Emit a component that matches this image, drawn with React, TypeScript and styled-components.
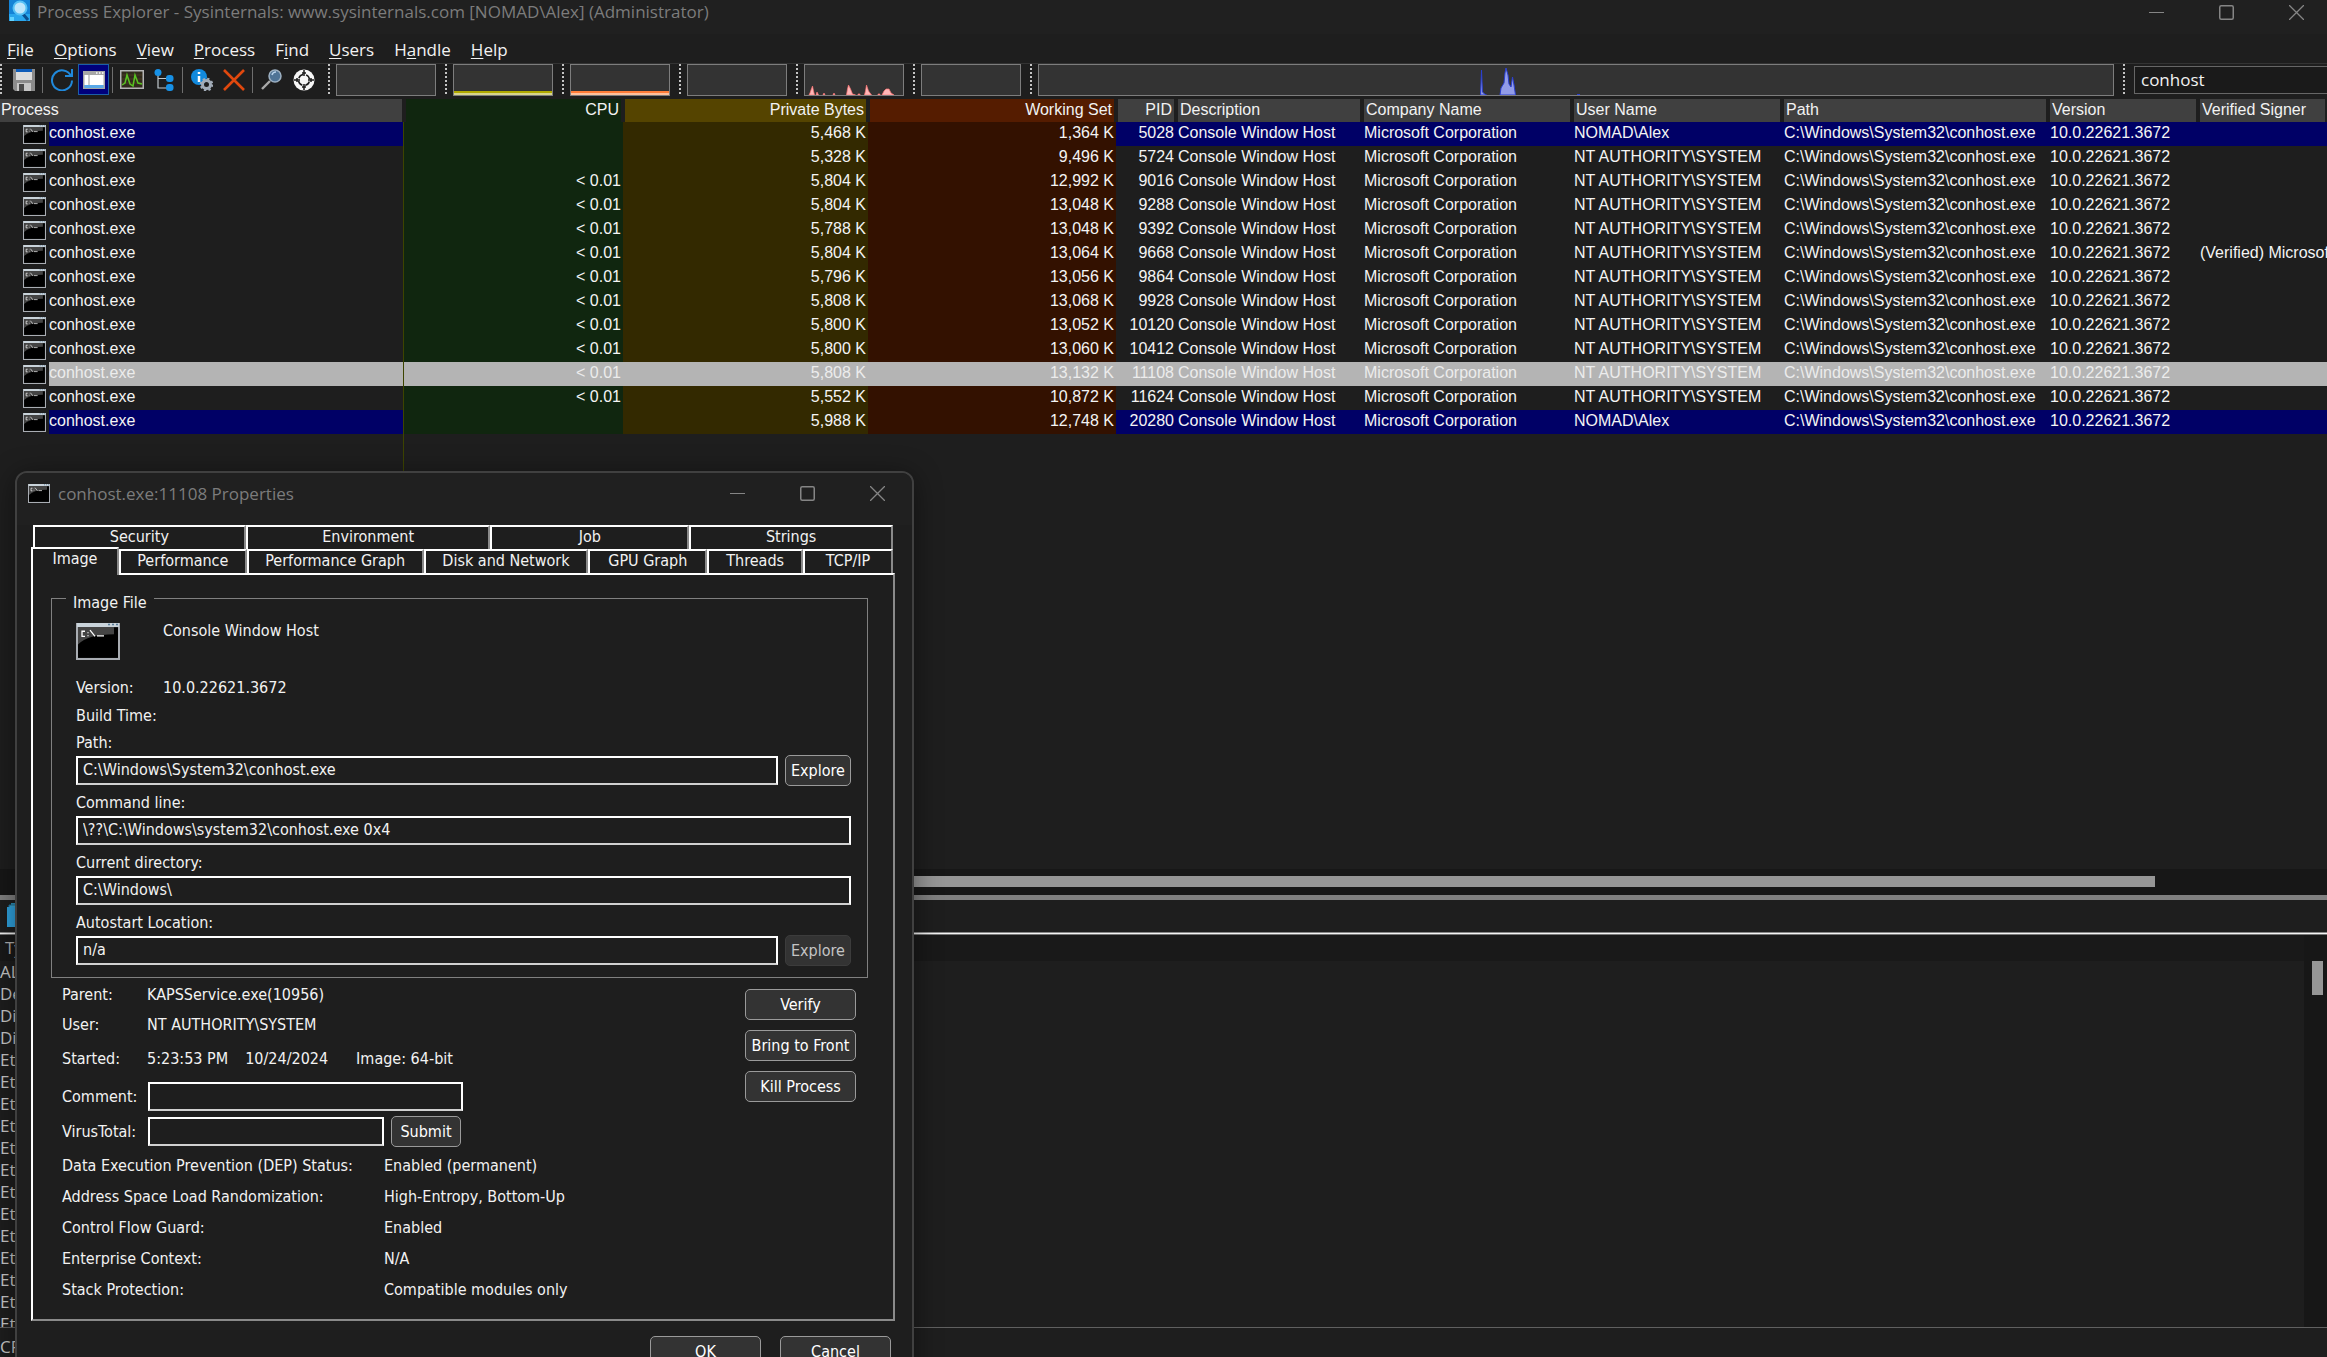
import React from "react";
import styled, { createGlobalStyle, css } from "styled-components";

const UI = `"Open Sans", "Noto Sans", sans-serif`;
const GRID = `"Liberation Sans", Arial, sans-serif`;
const DIALOG = `"DejaVu Sans Condensed", "DejaVu Sans", "Noto Sans", sans-serif`;

const GlobalStyle = createGlobalStyle`
  * { box-sizing: border-box; }
  body { margin: 0; background: #1e1e1e; color: #f2f2f2; overflow: hidden; }
  button, input { font: inherit; color: inherit; margin: 0; }
  button { padding: 0; border: 0; background: none; }
  svg { display: block; flex: none; }
`;

const Shell = styled.div`
  position: relative;
  display: flex;
  flex-direction: column;
  height: 100vh;
  overflow: hidden;
  font: 17px/24px ${UI};
`;

/* ---------- main window chrome ---------- */

const TitleBar = styled.header`
  display: flex;
  align-items: flex-start;
  height: 34px;
  padding-left: 9px;
  background: #202020;
  color: #7c7c7c;
`;

const WindowTitle = styled.h1`
  flex: 1;
  margin: 0;
  padding-left: 7px;
  font: inherit;
  white-space: nowrap;
`;

const WindowControls = styled.div`
  display: flex;
  gap: 8px;
`;

const WindowButton = styled.button`
  display: flex;
  align-items: center;
  justify-content: center;
  width: 62px;
  height: 24px;
`;

const MenuBar = styled.nav`
  display: flex;
  gap: 20px;
  height: 30px;
  padding: 4px 7px;
  border-bottom: 1px solid #333;
`;

const MenuItem = styled.button`
  white-space: nowrap;
  line-height: 24px;
  u { text-underline-offset: 2px; }
`;

const Toolbar = styled.div`
  display: flex;
  height: 35px;
  padding-bottom: 3px;
`;

const Grip = styled.span`
  flex: none;
  width: 2px;
  height: 30px;
  background: repeating-linear-gradient(#c4c4c4 0 2px, transparent 2px 4px);
`;

const IconRow = styled.div`
  display: flex;
  align-items: center;
  gap: 1px;
  width: 326px;
  height: 31px;
  padding-left: 6px;
`;

const ToolButton = styled.button<{ $active?: boolean }>`
  display: flex;
  align-items: center;
  justify-content: center;
  width: 31px;
  height: 31px;
  border: 1px solid ${(p) => (p.$active ? "#1c5fa6" : "transparent")};
  background: ${(p) => (p.$active ? "#00007c" : "transparent")};
`;

const ToolDivider = styled.span`
  width: 1px;
  height: 26px;
  margin: 0 2px;
  background: #6e6e6e;
`;

const GraphBand = styled.div<{ $wide?: boolean }>`
  display: flex;
  gap: 6px;
  padding-right: 9px;
  ${(p) => (p.$wide ? css`flex: 1;` : css`flex: none; width: 117px;`)}
`;

const GraphBox = styled.div`
  flex: 1;
  display: flex;
  align-items: flex-end;
  border: 1px solid #7d7d7d;
  background: #333;
`;

const LevelBar = styled.div<{ $top: string; $bottom: string }>`
  flex: 1;
  height: 4px;
  background: linear-gradient(${(p) => p.$top} 50%, ${(p) => p.$bottom} 50%);
`;

const SearchBand = styled.div`
  display: flex;
  gap: 9px;
  width: 204px;
`;

const SearchInput = styled.input`
  flex: 1;
  min-width: 0;
  height: 28px;
  margin-top: 2px;
  padding: 0 6px 2px;
  border: 1px solid #666;
  border-right: 0;
  border-radius: 0;
  background: #1a1a1a;
`;

/* ---------- process list ---------- */

const ProcessPane = styled.main`
  flex: 1;
  min-height: 0;
  overflow: hidden;
  display: flex;
  flex-direction: column;
  background: #1e1e1e;
`;

const ProcessTable = styled.table`
  width: 100%;
  table-layout: fixed;
  border-collapse: separate;
  border-spacing: 0;
  font: 16px/20px ${GRID};
`;

const HeadCell = styled.th<{ $bg?: string; $right?: boolean; $first?: boolean }>`
  height: 23px;
  padding: 0 2px 2px ${(p) => (p.$first ? "1px" : "2px")};
  border: solid #1e1e1e;
  border-width: 0 2px;
  border-left-width: ${(p) => (p.$first ? "0" : "2px")};
  background: ${(p) => p.$bg || "#404040"};
  font-weight: 400;
  text-align: ${(p) => (p.$right ? "right" : "left")};
  white-space: nowrap;
  overflow: hidden;
`;

type Tone = "own" | "selected" | "plain";
const toneBg = { own: "#000066", selected: "#b4b4b4", plain: "transparent" };

const Row = styled.tr<{ $tone: Tone }>`
  height: 24px;
  color: ${(p) => (p.$tone === "selected" ? "#ececec" : "#f4f4f4")};
`;

const Cell = styled.td<{ $tone: Tone; $bg?: string; $right?: boolean }>`
  padding: 0 2px 2px;
  text-align: ${(p) => (p.$right ? "right" : "left")};
  white-space: nowrap;
  overflow: hidden;
  background: ${(p) => (p.$tone === "selected" ? toneBg.selected : p.$bg || toneBg[p.$tone])};
`;

const NameCell = styled.td`
  padding: 0 0 0 23px;
  border-right: 1px solid #3d4400;
`;

const NameWrap = styled.div`
  display: flex;
  align-items: center;
  gap: 3px;
`;

const Name = styled.span<{ $tone: Tone }>`
  flex: 1;
  height: 24px;
  padding-bottom: 2px;
  line-height: 22px;
  background: ${(p) => toneBg[p.$tone]};
`;

const ColumnTail = styled.div`
  flex: 1;
  width: 404px;
  border-right: 1px solid #3d4400;
`;

const HScroll = styled.div`
  flex: none;
  display: flex;
  align-items: flex-start;
  height: 26px;
  padding: 7px 172px 0 20px;
  background: #171717;
`;

const HThumb = styled.div`
  flex: 1;
  height: 11px;
  background: #969696;
`;

/* ---------- handle list ---------- */

const LowerPane = styled.section`
  flex: none;
  border-top: 5px solid #808080;
`;

const LowerTabs = styled.div`
  height: 32px;
  padding: 3px 7px;
  background: #1e1e1e;
`;

const LowerRule = styled.div`
  height: 3px;
  background: linear-gradient(#888 0 1px, #f4f4f4 1px 2px, #777 2px);
`;

const LowerBody = styled.div`
  display: flex;
  height: 393px;
  border-bottom: 1px solid #606060;
  overflow: hidden;
`;

const HandleTable = styled.table`
  flex: 1;
  align-self: flex-start;
  border-collapse: collapse;
  color: #c8c8c8;
  font: 17px/22px ${UI};
  th { height: 26px; padding: 0 5px; background: #191919; color: #b0b0b0; font-weight: 400; text-align: left; }
  td { height: 22px; padding: 0; }
`;

const VScroll = styled.div`
  width: 23px;
  padding: 26px 4px 0 8px;
  background: #171717;
`;

const VThumb = styled.div`
  height: 34px;
  background: #969696;
`;

const StatusBar = styled.footer`
  height: 29px;
  padding-top: 9px;
  line-height: 20px;
  color: #c8c8c8;
`;

/* ---------- properties dialog ---------- */

const Dialog = styled.section`
  position: absolute;
  left: 15px;
  top: 471px;
  width: 899px;
  height: 920px;
  padding: 0 17px 0 14px;
  display: flex;
  flex-direction: column;
  border: 2px solid #404040;
  border-radius: 12px;
  background: #1e1e1e;
  box-shadow: 0 4px 28px rgba(0, 0, 0, 0.45);
  font: 16px/20px ${DIALOG};
`;

const DialogTitle = styled.header`
  display: flex;
  align-items: center;
  height: 52px;
  margin: 0 -17px 0 -14px;
  padding: 0 4px 11px 11px;
  border-radius: 10px 10px 0 0;
  background: #202020;
  color: #7c7c7c;
  font: 17px/24px ${UI};
`;

const DialogName = styled.h2`
  flex: 1;
  margin: 0;
  padding-left: 8px;
  font: inherit;
`;

const TabRow = styled.div<{ $cols: string }>`
  display: grid;
  grid-template-columns: ${(p) => p.$cols};
  margin: 0 2px;
`;

const Tab = styled.button<{ $selected?: boolean }>`
  position: relative;
  height: 24px;
  padding-bottom: 3px;
  line-height: 19px;
  border: solid #fff;
  border-width: 2px 2px 0 2px;
  border-right-color: #8a8a8a;
  background: #1e1e1e;
  white-space: nowrap;
  ${(p) =>
    p.$selected &&
    css`
      height: 28px;
      margin: -2px 0 -2px -2px;
      padding: 0 0 7px;
      z-index: 1;
    `}
`;

const Panel = styled.div`
  flex: none;
  height: 748px;
  padding: 8px 25px 0 18px;
  border: 2px solid #fff;
  border-right-color: #8a8a8a;
  border-bottom-color: #8a8a8a;
`;

const ImageFile = styled.fieldset`
  margin: 0;
  padding: 8px 16px 11px 24px;
  border: 1px solid #808080;
`;

const Legend = styled.legend`
  margin-left: -10px;
  padding: 10px 7px 0;
`;

const AppRow = styled.div`
  display: flex;
  align-items: flex-start;
  gap: 43px;
  height: 57px;
  svg { margin-top: 2px; }
`;

const Facts = styled.dl<{ $label: number; $gap: number }>`
  display: grid;
  grid-template-columns: ${(p) => p.$label}px 1fr;
  row-gap: ${(p) => p.$gap}px;
  margin: 0;
  dt, dd { margin: 0; min-height: 20px; white-space: nowrap; }
`;

const Field = styled.div`
  display: flex;
  flex-direction: column;
  gap: 2px;
  margin-top: 7px;
`;

const FieldRow = styled.div`
  display: flex;
  align-items: center;
  gap: 7px;
  height: 31px;
`;

const TextInput = styled.input<{ $width?: number }>`
  ${(p) => (p.$width ? css`width: ${p.$width}px;` : css`flex: 1;`)}
  min-width: 0;
  height: 29px;
  padding: 0 5px 3px;
  border: 2px solid #fff;
  border-bottom-color: #d0d0d0;
  border-radius: 0;
  background: #1e1e1e;
`;

const PushButton = styled.button<{ $width: number }>`
  flex: none;
  width: ${(p) => p.$width}px;
  height: 31px;
  border: 1px solid #9a9a9a;
  border-radius: 5px;
  background: #333;
  color: #fff;
  white-space: nowrap;
  &:disabled { border-color: #3c3c3c; color: #c4c4c4; }
`;

const Details = styled.div`
  display: flex;
  justify-content: space-between;
  padding: 7px 12px 0 11px;
`;

const DetailColumn = styled.div`
  display: flex;
  flex-direction: column;
`;

const Started = styled.div`
  display: flex;
  margin: 14px 0 12px;
`;

const StartedPart = styled.span<{ $space: number }>`
  padding-right: ${(p) => p.$space}px;
`;

const StartedLabel = styled.span`
  width: 85px;
`;

const LabelledRow = styled(FieldRow)`
  margin-bottom: 4px;
  label { width: 79px; }
`;

const Mitigations = styled(Facts)`
  margin-top: 5px;
`;

const ButtonColumn = styled.div`
  display: flex;
  flex-direction: column;
  gap: 10px;
  padding-top: 4px;
`;

const DialogButtons = styled.footer`
  display: flex;
  justify-content: flex-end;
  gap: 19px;
  padding: 15px 4px 0 0;
`;

/* ---------- drawings ---------- */

const ConsoleIcon = ({ w = 23, h = 19 }: { w?: number; h?: number }) => (
  <svg width={w} height={h} viewBox="0 0 44 36" preserveAspectRatio="none" aria-hidden>
    <rect x="1" y="1" width="42" height="34" fill="#000" stroke="#a9adb3" strokeWidth="2" />
    <rect x="1" y="0" width="42" height="4" fill="#c9d3da" />
    <path d="M32 1.500h2m2 0h2m2 0h2" stroke="#5a7c98" strokeWidth="1.500" />
    <path d="M2 4h36v7Q12 11 2 21z" fill="#444" />
    <path d="M9 8H6v5h3M12 9v1M12 12v1M14 7l5 6M21 12.500h7" fill="none" stroke="#fff" strokeWidth="1.300" />
  </svg>
);

const AppIcon = () => (
  <svg width="21" height="21" viewBox="0 0 21 21" aria-hidden>
    <rect width="21" height="21" fill="#1583d6" />
    <path d="M0 14h21v7H0z" fill="#2aa6ec" />
    <path d="M14 14l5 6" stroke="#0b4f8f" strokeWidth="3" />
    <circle cx="11" cy="8" r="6.500" fill="#bfe6fb" stroke="#57c1f5" strokeWidth="2" />
    <path d="M1 17h4v4H1z" fill="#62d3ff" />
  </svg>
);

const Minimize = () => (
  <svg width="15" height="15" viewBox="0 0 15 15" aria-hidden><path d="M0 7.500h15" stroke="#858585" /></svg>
);
const Maximize = () => (
  <svg width="15" height="15" viewBox="0 0 15 15" aria-hidden>
    <rect x=".75" y=".75" width="13.500" height="13.500" rx="1.500" fill="none" stroke="#858585" strokeWidth="1.500" />
  </svg>
);
const Close = () => (
  <svg width="15" height="15" viewBox="0 0 15 15" aria-hidden><path d="M0 0l15 15M15 0L0 15" stroke="#858585" strokeWidth="1.300" /></svg>
);

const SaveIcon = () => (
  <svg width="22" height="22" viewBox="0 0 22 22" aria-hidden>
    <path d="M0 0h22v22H2l-2-2z" fill="#8b8b8b" />
    <path d="M3 0h16v11H3z" fill="#dcdcdc" />
    <path d="M3 0h16v3H3z" fill="#0f5cb8" />
    <path d="M4 14h14v8H4z" fill="#c6c6c6" />
    <path d="M6 15h5v7H6z" fill="#4a4a4a" />
  </svg>
);
const RefreshIcon = () => (
  <svg width="22" height="22" viewBox="0 0 22 22" fill="none" stroke="#2089dc" strokeWidth="2" aria-hidden>
    <path d="M20 7A10 10 0 1 0 21 11.500M21 0v7h-7" />
  </svg>
);
const PaneIcon = () => (
  <svg width="22" height="18" viewBox="0 0 22 18" aria-hidden>
    <rect width="22" height="18" fill="#a6a6a6" />
    <rect x="1.500" y="4" width="19" height="10" fill="#fff" />
    <path d="M6 4v10" stroke="#999" />
    <path d="M1.500 14h19v3h-19z" fill="#58a8e8" />
    <path d="M13 2h1.500m1.500 0h1.500m1.500 0h1.500" stroke="#fff" strokeWidth="1.500" />
  </svg>
);
const ChartIcon = () => (
  <svg width="24" height="19" viewBox="0 0 24 19" aria-hidden>
    <rect x=".75" y=".75" width="22.500" height="17.500" fill="#302a1c" stroke="#b4b4b4" strokeWidth="1.500" />
    <path d="M2 5h20M2 9h20M2 13h20" stroke="#4a3a22" />
    <path d="M2 15l3-2 2-8 3 9 3 2 2-11 3 8 4 1" fill="none" stroke="#58c322" strokeWidth="1.500" />
  </svg>
);
const TreeIcon = () => (
  <svg width="20" height="22" viewBox="0 0 20 22" aria-hidden>
    <path d="M4 4v15h11M4 9.500h11" fill="none" stroke="#c0c8ce" strokeWidth="1.200" />
    <circle cx="4" cy="3.500" r="3.500" fill="#1791e6" />
    <rect x="12" y="6" width="7.500" height="7" rx="3" fill="#1791e6" />
    <rect x="12" y="15" width="7.500" height="7" rx="3" fill="#1791e6" />
  </svg>
);
const InfoIcon = () => (
  <svg width="22" height="22" viewBox="0 0 22 22" aria-hidden>
    <circle cx="8" cy="8" r="8" fill="#128ade" />
    <path d="M8 3v2M8 7v6" stroke="#fff" strokeWidth="2.500" />
    <circle cx="15.500" cy="15.500" r="4" fill="none" stroke="#a2acb8" strokeWidth="3" />
    <circle cx="15.500" cy="15.500" r="5.800" fill="none" stroke="#a2acb8" strokeWidth="2" strokeDasharray="2.300 2.250" />
  </svg>
);
const KillIcon = () => (
  <svg width="22" height="22" viewBox="0 0 22 22" aria-hidden><path d="M1 1l20 20M21 1L1 21" stroke="#e0480e" strokeWidth="2.600" /></svg>
);
const FindIcon = () => (
  <svg width="21" height="21" viewBox="0 0 21 21" aria-hidden>
    <path d="M1 20l8-8" stroke="#a9a9a9" strokeWidth="2.400" />
    <circle cx="14" cy="7" r="6" fill="#4f7396" stroke="#9db0c2" strokeWidth="1.500" />
    <path d="M11 6a4 4 0 0 1 4-3" fill="none" stroke="#b8d2ea" strokeWidth="1.500" />
  </svg>
);
const TargetIcon = () => (
  <svg width="22" height="22" viewBox="0 0 22 22" fill="none" aria-hidden>
    <circle cx="11" cy="11" r="10.500" fill="#f6f6f6" />
    <circle cx="11" cy="11" r="5.500" stroke="#1a1a1a" strokeWidth="1.500" strokeDasharray="5.640 3" strokeDashoffset="-1.500" />
    <path d="M11 1v6M11 15v6M1 11h6M15 11h6M9 4h4M9 18h4M4 9v4M18 9v4" stroke="#1a1a1a" strokeWidth="1.500" />
  </svg>
);
const HandlesIcon = () => (
  <svg width="22" height="24" viewBox="0 0 22 24" aria-hidden>
    <path d="M4 0h18v20H4z" fill="#2c8fb8" />
    <path d="M2 2h18v20H2z" fill="#3aa6d2" stroke="#1e6f96" />
    <path d="M0 4h18v20H0z" fill="#2fa3e0" />
  </svg>
);

const IoSpikes = () => (
  <svg width="98" height="12" viewBox="0 0 98 12" aria-hidden>
    <path d="M4 12l1-2 1-3 1.500-4 1 5 1 4zM11 12l1-3 1.500 3zM18 12l1-2 1 2zM28 12l1-2 1 2zM41.500 12l1-6 1-4 2 4 2 5 3 1zM53 12v-1h2v1zM59.500 12l1-4 1-6 2 6 3 4zM73 12v-1h2v1zM77 12l2-4 2-2h3l2 4 3 2z" fill="#ffb8b8" stroke="#ff7474" strokeWidth=".7" />
  </svg>
);

const SpikeSlot = styled.div`
  margin-left: 40%;
`;

const CpuSpikes = () => (
  <svg width="119" height="28" viewBox="-9 0 119 28" aria-hidden>
    <path d="M2.500 28l.5-12 .5-13 .5 12 .5 10 2 2 2 1zM22 28l1-7 3-5 1-10 1-5 2 7 1 9 2 3 1.500-10 1.500 8 1.500 10z" fill="#929ce8" stroke="#2a3fd0" strokeWidth="1" />
    <path d="M99 27.500h3" stroke="#2a3fd0" />
  </svg>
);

/* ---------- data ---------- */

const menu: [string, string, string][] = [
  ["", "F", "ile"], ["", "O", "ptions"], ["", "V", "iew"], ["", "P", "rocess"],
  ["F", "i", "nd"], ["", "U", "sers"], ["H", "a", "ndle"], ["", "H", "elp"],
];

const LOW = "< 0.01";
const SYSTEM = "NT AUTHORITY\\SYSTEM";
const ALEX = "NOMAD\\Alex";

type Proc = { cpu: string; priv: string; ws: string; pid: string; user: string; tone: Tone; signer?: string };
const processes: Proc[] = [
  { cpu: "", priv: "5,468 K", ws: "1,364 K", pid: "5028", user: ALEX, tone: "own" },
  { cpu: "", priv: "5,328 K", ws: "9,496 K", pid: "5724", user: SYSTEM, tone: "plain" },
  { cpu: LOW, priv: "5,804 K", ws: "12,992 K", pid: "9016", user: SYSTEM, tone: "plain" },
  { cpu: LOW, priv: "5,804 K", ws: "13,048 K", pid: "9288", user: SYSTEM, tone: "plain" },
  { cpu: LOW, priv: "5,788 K", ws: "13,048 K", pid: "9392", user: SYSTEM, tone: "plain" },
  { cpu: LOW, priv: "5,804 K", ws: "13,064 K", pid: "9668", user: SYSTEM, tone: "plain", signer: "(Verified) Microsoft" },
  { cpu: LOW, priv: "5,796 K", ws: "13,056 K", pid: "9864", user: SYSTEM, tone: "plain" },
  { cpu: LOW, priv: "5,808 K", ws: "13,068 K", pid: "9928", user: SYSTEM, tone: "plain" },
  { cpu: LOW, priv: "5,800 K", ws: "13,052 K", pid: "10120", user: SYSTEM, tone: "plain" },
  { cpu: LOW, priv: "5,800 K", ws: "13,060 K", pid: "10412", user: SYSTEM, tone: "plain" },
  { cpu: LOW, priv: "5,808 K", ws: "13,132 K", pid: "11108", user: SYSTEM, tone: "selected" },
  { cpu: LOW, priv: "5,552 K", ws: "10,872 K", pid: "11624", user: SYSTEM, tone: "plain" },
  { cpu: "", priv: "5,988 K", ws: "12,748 K", pid: "20280", user: ALEX, tone: "own" },
];

const handleTypes = ["ALPC Port", "Desktop", "Directory", "Directory", ...Array(13).fill("EtwRegistration")];

const columnWidths = [404, 219, 245, 248, 60, 186, 210, 210, 266, 150];

const WindowButtons = () => (
  <WindowControls>
    <WindowButton aria-label="Minimize"><Minimize /></WindowButton>
    <WindowButton aria-label="Maximize"><Maximize /></WindowButton>
    <WindowButton aria-label="Close"><Close /></WindowButton>
  </WindowControls>
);

const ProcessRow = ({ p }: { p: Proc }) => (
  <Row $tone={p.tone}>
    <NameCell>
      <NameWrap><ConsoleIcon /><Name $tone={p.tone}>conhost.exe</Name></NameWrap>
    </NameCell>
    <Cell $tone={p.tone} $right $bg="#10260f">{p.cpu}</Cell>
    <Cell $tone={p.tone} $right $bg="#332900">{p.priv}</Cell>
    <Cell $tone={p.tone} $right $bg="#331100">{p.ws}</Cell>
    <Cell $tone={p.tone} $right>{p.pid}</Cell>
    <Cell $tone={p.tone}>Console Window Host</Cell>
    <Cell $tone={p.tone}>Microsoft Corporation</Cell>
    <Cell $tone={p.tone}>{p.user}</Cell>
    <Cell $tone={p.tone}>{"C:\\Windows\\System32\\conhost.exe"}</Cell>
    <Cell $tone={p.tone}>10.0.22621.3672</Cell>
    <Cell $tone={p.tone}>{p.signer}</Cell>
  </Row>
);

const PropertiesDialog = () => (
  <Dialog role="dialog" aria-labelledby="dialog-title">
    <DialogTitle>
      <ConsoleIcon w={22} h={19} />
      <DialogName id="dialog-title">conhost.exe:11108 Properties</DialogName>
      <WindowButtons />
    </DialogTitle>
    <TabRow role="tablist" $cols="213fr 245fr 199fr 204fr">
      {["Security", "Environment", "Job", "Strings"].map((t) => <Tab key={t} role="tab">{t}</Tab>)}
    </TabRow>
    <TabRow role="tablist" $cols="86fr 128fr 177fr 165fr 119fr 96fr 90fr">
      {["Image", "Performance", "Performance Graph", "Disk and Network", "GPU Graph", "Threads", "TCP/IP"].map((t, i) => (
        <Tab key={t} role="tab" aria-selected={i === 0} $selected={i === 0}>{t}</Tab>
      ))}
    </TabRow>
    <Panel role="tabpanel">
      <ImageFile>
        <Legend>Image File</Legend>
        <AppRow><ConsoleIcon w={44} h={37} />Console Window Host</AppRow>
        <Facts $label={87} $gap={8}>
          <dt>Version:</dt><dd>10.0.22621.3672</dd>
          <dt>Build Time:</dt><dd />
        </Facts>
        <Field>
          <label htmlFor="path">Path:</label>
          <FieldRow><TextInput id="path" readOnly value={"C:\\Windows\\System32\\conhost.exe"} /><PushButton $width={66}>Explore</PushButton></FieldRow>
        </Field>
        <Field>
          <label htmlFor="cmd">Command line:</label>
          <FieldRow><TextInput id="cmd" readOnly value={"\\??\\C:\\Windows\\system32\\conhost.exe 0x4"} /></FieldRow>
        </Field>
        <Field>
          <label htmlFor="cwd">Current directory:</label>
          <FieldRow><TextInput id="cwd" readOnly value={"C:\\Windows\\"} /></FieldRow>
        </Field>
        <Field>
          <label htmlFor="auto">Autostart Location:</label>
          <FieldRow><TextInput id="auto" readOnly value="n/a" /><PushButton $width={66} disabled>Explore</PushButton></FieldRow>
        </Field>
      </ImageFile>
      <Details>
        <DetailColumn>
          <Facts $label={85} $gap={10}>
            <dt>Parent:</dt><dd>KAPSService.exe(10956)</dd>
            <dt>User:</dt><dd>{SYSTEM}</dd>
          </Facts>
          <Started>
            <StartedLabel>Started:</StartedLabel>
            <StartedPart $space={17}>5:23:53 PM</StartedPart>
            <StartedPart $space={28}>10/24/2024</StartedPart>
            <span>Image: 64-bit</span>
          </Started>
          <LabelledRow>
            <label htmlFor="comment">Comment:</label>
            <TextInput id="comment" $width={315} />
          </LabelledRow>
          <LabelledRow>
            <label htmlFor="vt">VirusTotal:</label>
            <TextInput id="vt" $width={236} />
            <PushButton $width={70}>Submit</PushButton>
          </LabelledRow>
          <Mitigations $label={322} $gap={11}>
            <dt>Data Execution Prevention (DEP) Status:</dt><dd>Enabled (permanent)</dd>
            <dt>Address Space Load Randomization:</dt><dd>High-Entropy, Bottom-Up</dd>
            <dt>Control Flow Guard:</dt><dd>Enabled</dd>
            <dt>Enterprise Context:</dt><dd>N/A</dd>
            <dt>Stack Protection:</dt><dd>Compatible modules only</dd>
          </Mitigations>
        </DetailColumn>
        <ButtonColumn>
          <PushButton $width={111}>Verify</PushButton>
          <PushButton $width={111}>Bring to Front</PushButton>
          <PushButton $width={111}>Kill Process</PushButton>
        </ButtonColumn>
      </Details>
    </Panel>
    <DialogButtons>
      <PushButton $width={111}>OK</PushButton>
      <PushButton $width={111}>Cancel</PushButton>
    </DialogButtons>
  </Dialog>
);

export default function App() {
  return (
    <Shell>
      <GlobalStyle />
      <TitleBar>
        <AppIcon />
        <WindowTitle>{"Process Explorer - Sysinternals: www.sysinternals.com [NOMAD\\Alex] (Administrator)"}</WindowTitle>
        <WindowButtons />
      </TitleBar>
      <MenuBar>
        {menu.map(([a, u, b]) => <MenuItem key={u + b}>{a}<u>{u}</u>{b}</MenuItem>)}
      </MenuBar>
      <Toolbar>
        <Grip />
        <IconRow>
          <ToolButton aria-label="Save"><SaveIcon /></ToolButton>
          <ToolDivider />
          <ToolButton aria-label="Refresh"><RefreshIcon /></ToolButton>
          <ToolButton aria-label="Show lower pane" $active><PaneIcon /></ToolButton>
          <ToolDivider />
          <ToolButton aria-label="System information"><ChartIcon /></ToolButton>
          <ToolButton aria-label="Show process tree"><TreeIcon /></ToolButton>
          <ToolDivider />
          <ToolButton aria-label="Properties"><InfoIcon /></ToolButton>
          <ToolButton aria-label="Kill process"><KillIcon /></ToolButton>
          <ToolDivider />
          <ToolButton aria-label="Find handle or DLL"><FindIcon /></ToolButton>
          <ToolButton aria-label="Find window's process"><TargetIcon /></ToolButton>
        </IconRow>
        <GraphBand><Grip /><GraphBox /></GraphBand>
        <GraphBand><Grip /><GraphBox><LevelBar $top="#b0a800" $bottom="#d8d48c" /></GraphBox></GraphBand>
        <GraphBand><Grip /><GraphBox><LevelBar $top="#ff7c38" $bottom="#ffc09c" /></GraphBox></GraphBand>
        <GraphBand><Grip /><GraphBox /></GraphBand>
        <GraphBand><Grip /><GraphBox><IoSpikes /></GraphBox></GraphBand>
        <GraphBand><Grip /><GraphBox /></GraphBand>
        <GraphBand $wide><Grip /><GraphBox><SpikeSlot><CpuSpikes /></SpikeSlot></GraphBox></GraphBand>
        <SearchBand><Grip /><SearchInput aria-label="Filter by name" defaultValue="conhost" /></SearchBand>
      </Toolbar>
      <ProcessPane>
        <ProcessTable>
          <colgroup>
            {columnWidths.map((w, i) => <col key={i} width={w} />)}
            <col />
          </colgroup>
          <thead>
            <tr>
              <HeadCell $first>Process</HeadCell>
              <HeadCell $right $bg="#10260f">CPU</HeadCell>
              <HeadCell $right $bg="#554400">Private Bytes</HeadCell>
              <HeadCell $right $bg="#551c00">Working Set</HeadCell>
              <HeadCell $right>PID</HeadCell>
              <HeadCell>Description</HeadCell>
              <HeadCell>Company Name</HeadCell>
              <HeadCell>User Name</HeadCell>
              <HeadCell>Path</HeadCell>
              <HeadCell>Version</HeadCell>
              <HeadCell>Verified Signer</HeadCell>
            </tr>
          </thead>
          <tbody>{processes.map((p) => <ProcessRow key={p.pid} p={p} />)}</tbody>
        </ProcessTable>
        <ColumnTail />
        <HScroll><HThumb /></HScroll>
      </ProcessPane>
      <LowerPane>
        <LowerTabs><HandlesIcon /></LowerTabs>
        <LowerRule />
        <LowerBody>
          <HandleTable>
            <thead><tr><th>Type</th></tr></thead>
            <tbody>{handleTypes.map((t, i) => <tr key={i}><td>{t}</td></tr>)}</tbody>
          </HandleTable>
          <VScroll><VThumb /></VScroll>
        </LowerBody>
        <StatusBar>CPU Usage</StatusBar>
      </LowerPane>
      <PropertiesDialog />
    </Shell>
  );
}
